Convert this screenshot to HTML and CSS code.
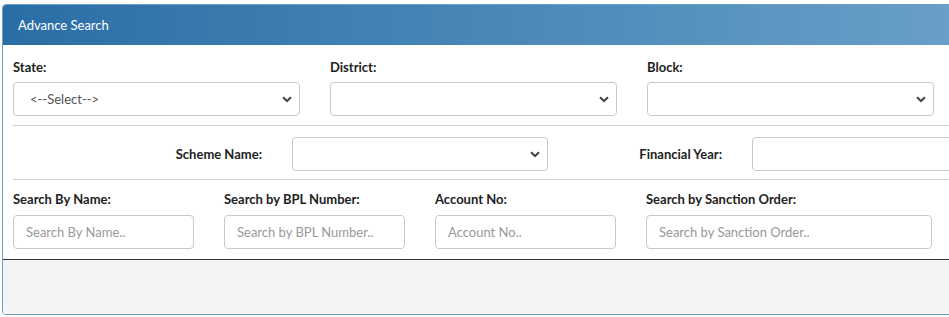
FILE: index.html
```html
<!DOCTYPE html>
<html>
<head>
<meta charset="utf-8">
<link rel="stylesheet" href="styles.css">
</head>
<body>
<div class="panel">
  <div class="panel-heading">Advance Search</div>
  <div class="panel-body">
    <div class="row row-three">
      <div class="field">
        <label class="lbl">State:</label>
        <div class="select-wrap">
          <select class="ctrl"><option>&lt;--Select--&gt;</option></select>
          <svg class="chev" width="10" height="7" viewBox="0 0 10 7"><path d="M1 1.2 L5 5 L9 1.2" fill="none" stroke="#444" stroke-width="2"/></svg>
        </div>
      </div>
      <div class="field">
        <label class="lbl">District:</label>
        <div class="select-wrap">
          <select class="ctrl"><option></option></select>
          <svg class="chev" width="10" height="7" viewBox="0 0 10 7"><path d="M1 1.2 L5 5 L9 1.2" fill="none" stroke="#444" stroke-width="2"/></svg>
        </div>
      </div>
      <div class="field">
        <label class="lbl">Block:</label>
        <div class="select-wrap">
          <select class="ctrl"><option></option></select>
          <svg class="chev" width="10" height="7" viewBox="0 0 10 7"><path d="M1 1.2 L5 5 L9 1.2" fill="none" stroke="#444" stroke-width="2"/></svg>
        </div>
      </div>
    </div>
    <hr class="sep sep-one">
    <div class="row row-inline">
      <label class="lbl lbl-right">Scheme Name:</label>
      <div class="select-wrap w256">
        <select class="ctrl"><option></option></select>
        <svg class="chev" width="10" height="7" viewBox="0 0 10 7"><path d="M1 1.2 L5 5 L9 1.2" fill="none" stroke="#444" stroke-width="2"/></svg>
      </div>
      <label class="lbl lbl-right">Financial Year:</label>
      <div class="select-wrap w256">
        <select class="ctrl"><option></option></select>
        <svg class="chev" width="10" height="7" viewBox="0 0 10 7"><path d="M1 1.2 L5 5 L9 1.2" fill="none" stroke="#444" stroke-width="2"/></svg>
      </div>
    </div>
    <hr class="sep sep-two">
    <div class="row row-four">
      <div class="field">
        <label class="lbl">Search By Name:</label>
        <input class="ctrl txt" type="text" placeholder="Search By Name..">
      </div>
      <div class="field">
        <label class="lbl">Search by BPL Number:</label>
        <input class="ctrl txt" type="text" placeholder="Search by BPL Number..">
      </div>
      <div class="field">
        <label class="lbl">Account No:</label>
        <input class="ctrl txt" type="text" placeholder="Account No..">
      </div>
      <div class="field">
        <label class="lbl">Search by Sanction Order:</label>
        <input class="ctrl txt" type="text" placeholder="Search by Sanction Order..">
      </div>
    </div>
  </div>
  <div class="panel-footer"></div>
</div>
</body>
</html>
```
FILE: styles.css
```css
html, body {
  margin: 0;
  padding: 0;
  background: #ffffff;
  overflow: hidden;
}
body {
  padding: 4px 0 0 2px;
  font-family: Lato, "Open Sans", "Liberation Sans", sans-serif;
  font-size: 13px;
  color: #222;
}
.panel {
  width: 1010px;
  border: 1px solid #6c9fc8;
  border-radius: 4px;
  background: #fff;
  overflow: hidden;
}
.panel-heading {
  height: 40px;
  line-height: 40px;
  padding-left: 15px;
  color: #fff;
  font-size: 13px;
  background: linear-gradient(to right, #2a6ea6 0%, #4a88b8 50%, #6da2ca 100%);
}
.panel-body {
  padding: 13px 0 10px 10px;
}
.row {
  display: flex;
}
.row-three {
  gap: 30px;
}
.row-three .field {
  width: 287px;
}
.field {
  display: flex;
  flex-direction: column;
}
.lbl {
  font-weight: bold;
  font-size: 13px;
  line-height: 18px;
  color: #222;
  margin-bottom: 6px;
}
.select-wrap {
  position: relative;
}
.ctrl {
  display: block;
  box-sizing: border-box;
  width: 100%;
  height: 34px;
  margin: 0;
  border: 1px solid #c8c8c8;
  border-radius: 4px;
  background: #fff;
  font-family: inherit;
  font-size: 13px;
  color: #555;
  -webkit-appearance: none;
  appearance: none;
  padding: 0 16px;
  outline: none;
}
.chev {
  position: absolute;
  right: 8px;
  top: 14px;
}
.sep {
  border: 0;
  border-top: 1px solid #d2d2d2;
  margin: 0;
}
.sep-one {
  margin-top: 9px;
  margin-bottom: 11px;
}
.sep-two {
  margin-top: 8px;
  margin-bottom: 10px;
}
.row-inline {
  align-items: center;
  gap: 30px;
  padding-left: 105px;
}
.row-inline .lbl {
  margin-bottom: 0;
}
.lbl-right {
  width: 144px;
  text-align: right;
}
.w256 {
  width: 256px;
  flex: none;
}
.row-four {
  gap: 30px;
}
.row-four .field {
  width: 181px;
}
.row-four .field:last-child {
  width: 286px;
}
.row-four .lbl {
  margin-bottom: 7px;
}
.txt {
  padding: 0 12px;
}
.txt::placeholder {
  color: #999;
}
.panel-footer {
  height: 54px;
  background: #f4f4f4;
  border-top: 1px solid #333;
}
```
